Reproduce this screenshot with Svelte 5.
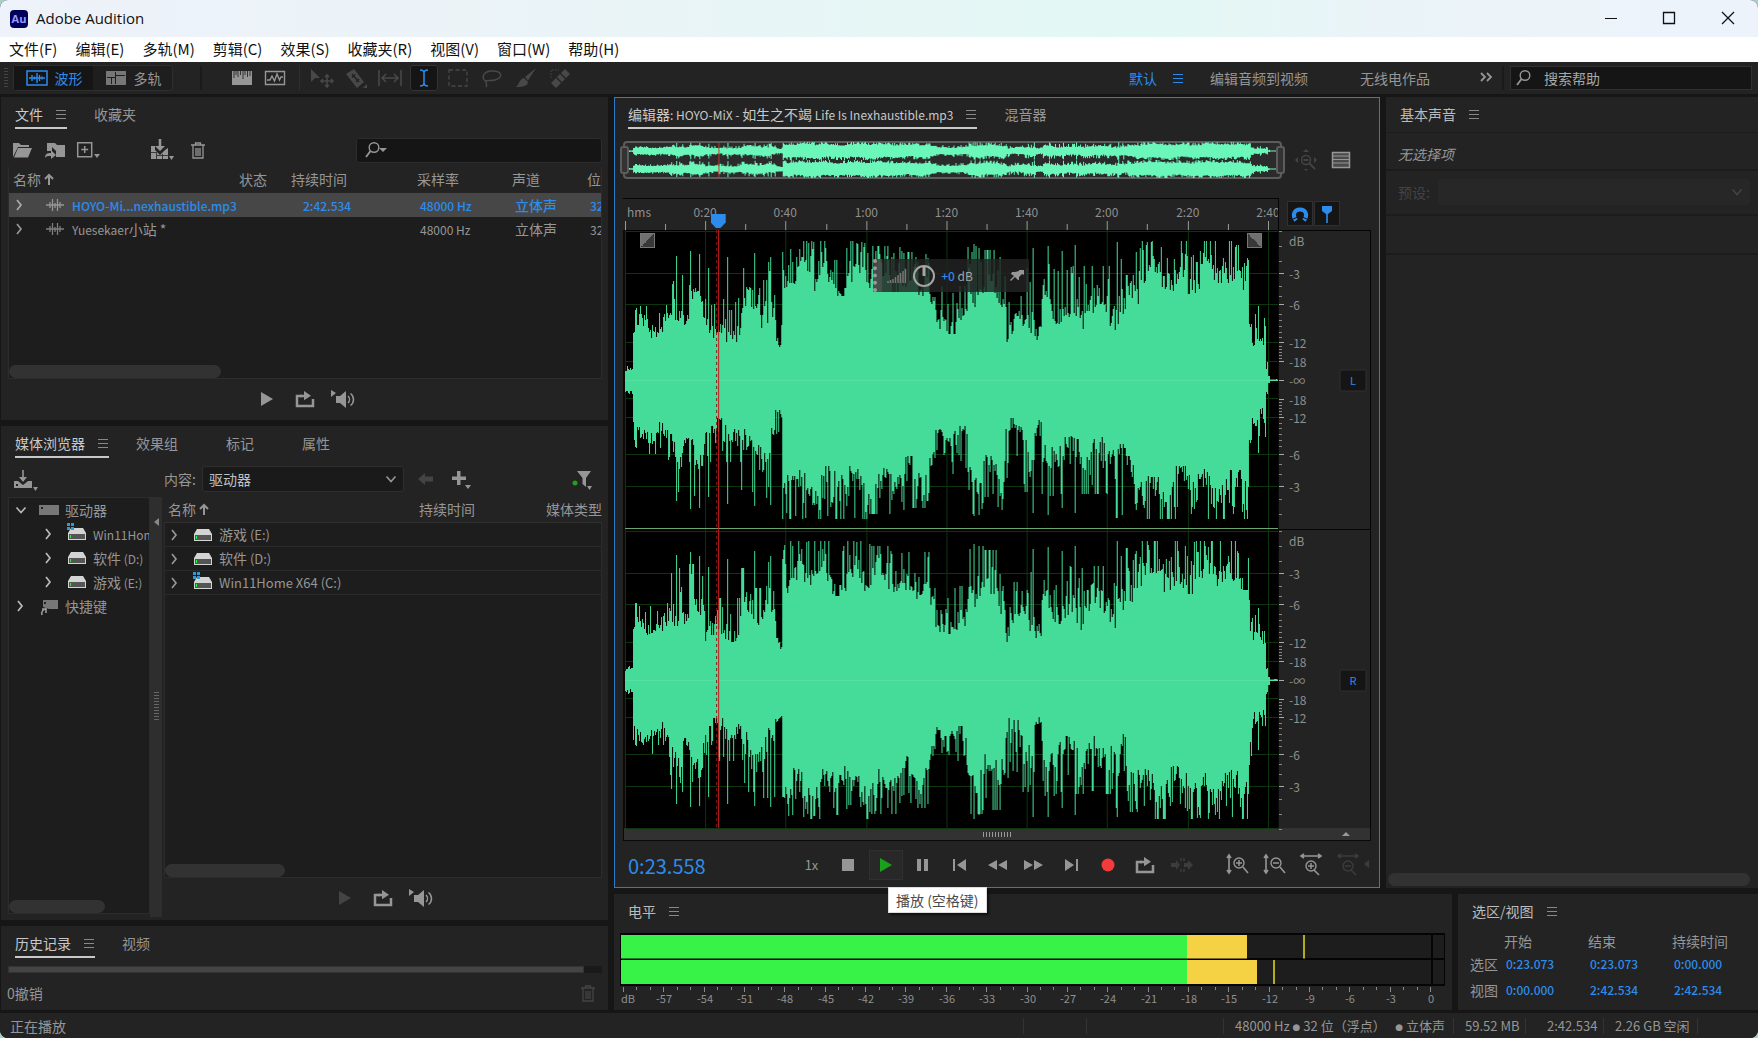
<script lang="ts">
  const menus = ['文件(F)', '编辑(E)', '多轨(M)', '剪辑(C)', '效果(S)', '收藏夹(R)', '视图(V)', '窗口(W)', '帮助(H)'];
  const tools = ['move', 'razor', 'slip', 'ibeam', 'marquee', 'lasso', 'brush', 'heal'];

  const files = [
    { name: 'HOYO-Mi...nexhaustible.mp3', suffix: '', duration: '2:42.534', rate: '48000 Hz', channels: '立体声', bits: '32', active: true },
    { name: 'Yuesekaer', suffix: '小站 *', duration: '', rate: '48000 Hz', channels: '立体声', bits: '32', active: false },
  ];
  const tree = [
    { label: '驱动器', mount: '', icon: 'drives', depth: 0, open: true },
    { label: '', mount: 'Win11Home', icon: 'sysdrive', depth: 1 },
    { label: '软件', mount: ' (D:)', icon: 'drive', depth: 1 },
    { label: '游戏', mount: ' (E:)', icon: 'drive', depth: 1 },
    { label: '快捷键', mount: '', icon: 'shortcut', depth: 0 },
  ];
  const drives = [
    { label: '游戏', mount: ' (E:)', icon: 'drive' },
    { label: '软件', mount: ' (D:)', icon: 'drive' },
    { label: '', mount: 'Win11Home X64 (C:)', icon: 'sysdrive' },
  ];
  const transport = ['stop', 'play', 'pause', 'prev', 'rewind', 'forward', 'next', 'record', 'loop', 'skip'];
  const zooms = ['zoomInV', 'zoomOutV', 'zoomInH', 'zoomOutH'];
  const ranges = [
    { label: '选区', start: '0:23.073', end: '0:23.073', length: '0:00.000' },
    { label: '视图', start: '0:00.000', end: '2:42.534', length: '2:42.534' },
  ];

  const W = 652;
  const H = 598;
  const seconds = 162.534;
  const timeX = (s: number) => Math.round((s / seconds) * W);
  const ruler = Array.from({ length: 17 }, (_, i) => i * 10);
  const clock = (s: number) => `${Math.floor(s / 60)}:${String(s % 60).padStart(2, '0')}`;
  const pct = (v: number, total: number) => `${(v / total) * 100}%`;

  // Envelope sections: [end x, quietest, loudest], in pixels from the centre line.
  const sections = [
    [8, 9, 14], [10, 38, 60], [12, 60, 77], [38, 42, 74], [45, 48, 84], [59, 54, 112], [64, 54, 66],
    [78, 56, 116], [80, 55, 75], [94, 38, 82], [116, 38, 82], [130, 46, 112], [138, 50, 92], [150, 48, 118],
    [157, 30, 60], [162, 92, 139], [205, 86, 139], [245, 84, 139], [280, 88, 134], [304, 76, 128],
    [310, 62, 92], [316, 44, 70], [342, 46, 94], [358, 70, 134], [380, 66, 130], [393, 38, 98], [409, 46, 112],
    [416, 34, 56], [430, 56, 116], [455, 56, 114], [490, 50, 114], [500, 54, 138], [515, 76, 132],
    [540, 86, 139], [580, 86, 139], [623, 90, 139], [626, 48, 85], [632, 32, 66], [638, 24, 56], [640, 26, 62],
    [642, 8, 18], [644, 2, 5], [653, 0, 1],
  ];
  const spikes: Record<number, number> = {
    51: 126, 65: 130, 74: 128, 83: 118, 102: 126, 129: 130, 145: 128, 302: 126, 348: 139, 353: 138,
    407: 137, 422: 139, 436: 133, 449: 135, 491: 139, 510: 130, 632: 76,
  };

  function noise(seed: number) {
    let s = seed;
    return () => {
      s = (s * 1664525 + 1013904223) % 4294967296;
      return s / 4294967296;
    };
  }

  function envelope(seed: number): number[] {
    const rnd = noise(seed);
    const out: number[] = [];
    let part = 0;
    for (let x = 0; x < W; x++) {
      while (x >= sections[part][0]) part++;
      const [, lo, hi] = sections[part];
      const swell = 0.16 * Math.sin(x / 4.3 + seed) + 0.12 * Math.sin(x / 9.1);
      // a ragged body with narrow peaks standing out of it, fewer where it is quiet
      const level = rnd() < (lo < 60 ? 0.7 : 0.58) ? 0.1 + rnd() * 0.4 + swell : 0.45 + rnd() * 0.75 + swell;
      let a = lo + (hi - lo) * Math.max(0, Math.min(1, level));
      if (spikes[x]) a = spikes[x] - rnd() * 6;
      out.push(Math.round(a));
    }
    return out;
  }

  function shape(top: number[], bottom: number[], mid: number, scale: number): string {
    let d = `M0 ${mid}`;
    top.forEach((a, x) => (d += `V${(mid - Math.max(0.5, a * scale)).toFixed(1)}H${x + 1}`));
    for (let x = W - 1; x >= 0; x--) d += `V${(mid + Math.max(0.5, bottom[x] * scale)).toFixed(1)}H${x}`;
    return d + 'Z';
  }

  const channels = [
    { mid: 150, mini: 8, top: envelope(11), bottom: envelope(52) },
    { mid: 450, mini: 26, top: envelope(87), bottom: envelope(34) },
  ];
  const waves = channels.map((c) => shape(c.top, c.bottom, c.mid, 1));
  const minis = channels.map((c) => shape(c.top, c.bottom, c.mini, 0.064));

  const gridY = [-149, -107, -76, -38, -19, 18, 37, 74, 106, 148];
  const dbMarks: [string, number][] = [
    ['-3', -107], ['-6', -76], ['-12', -38], ['-18', -19], ['-∞', 0], ['-18', 19], ['-12', 37], ['-6', 74], ['-3', 106],
  ];
  const dbTicks = [-149, -134, -119, -94, -84, -66, -60, -54, -48, -43, -34, -31, -28, -25, -22];
  const allTicks = [...dbTicks, ...dbTicks.map((t) => -t)];

  const M = 825;
  const meterX = (db: number) => Math.round(811 + (db * 807) / 60);
  const meterTicks = Array.from({ length: 61 }, (_, i) => i - 60);
  const meters = [
    { level: 627, peak: 683 },
    { level: 637, peak: 653 },
  ];
</script>

{#snippet icon(name: string)}
  <svg class="icon" viewBox="0 0 24 24" width="24" height="24" aria-hidden="true">
    {#if name === 'wave'}
      <path d="M2 5h20v14H2z" fill="none" stroke="currentColor" stroke-width="1.5" />
      <path d="M4 12h16M7 9v6M9.500 10.500v3M12 7v10M14.500 9v6M17 10.500v3" stroke="currentColor" stroke-width="1.400" />
    {:else if name === 'multi'}
      <path d="M2 5h9v6H2zM12 5h10v4H12zM2 12h5v7H2zM8 12h3v7H8zM12 10h10v9H12z" fill="#777" />
      <path d="M2.500 5.500h19v13h-19z" fill="none" stroke="#777" />
    {:else if name === 'spectral'}
      <path d="M2 5h20v14H2z" fill="currentColor" />
      <path d="M4 5v7M6 5v4M8 5v6M10.500 5v4M13 5v8M15 5v4M17.500 5v6M20 5v5" stroke="#333" />
    {:else if name === 'pitch'}
      <path d="M2.500 5.500h19v13h-19zM4 14h3l2-4 2.500 5 2.500-7 2.500 6 1.500-3h2" fill="none" stroke="currentColor" stroke-width="1.400" />
    {:else if name === 'move'}
      <path d="M1 3v13l4-4h5z" fill="currentColor" />
      <path d="M17 9v12M11 15h12M15 11l2-2 2 2M15 19l2 2 2-2M13 13l-2 2 2 2M21 13l2 2-2 2" fill="none" stroke="currentColor" stroke-width="1.600" />
    {:else if name === 'razor'}
      <path d="M2 8l8-5 10 13-7 6z" fill="currentColor" />
      <path d="M8 8l7 8M8 11.500l3-3M12 16l3-3" stroke="#232323" stroke-width="1.600" />
      <path d="M23 18v4h-4z" fill="currentColor" />
    {:else if name === 'slip'}
      <path d="M1 4v16M23 4v16M4 12h16M8 8l-4 4 4 4M16 8l4 4-4 4" fill="none" stroke="currentColor" stroke-width="1.600" />
    {:else if name === 'ibeam'}
      <path d="M8 4c3 0 4 1 4 3v10c0 2-1 3-4 3M16 4c-3 0-4 1-4 3v10c0 2 1 3 4 3" fill="none" stroke="currentColor" stroke-width="1.500" />
    {:else if name === 'marquee'}
      <path d="M3 4h18v16H3z" fill="none" stroke="currentColor" stroke-width="1.300" stroke-dasharray="4 2.500" />
    {:else if name === 'lasso'}
      <path d="M7 16C1 13 2 6 11 5c11-1 13 7 4 9-4 1-8 0-9 1s2 4 0 6" fill="none" stroke="currentColor" stroke-width="1.500" />
    {:else if name === 'brush'}
      <path d="M22 2L11 11l3 3.500zM10 12l4 4c0 4-5 5-12 5 3-2 3-8 8-9z" fill="currentColor" />
    {:else if name === 'heal'}
      <path d="M3 17l5-5 5 5-5 5zM9 11l3-3 5 5-3 3zM13 7l4-4 5 5-4 4z" fill="currentColor" />
      <path d="M3 12V4h8" fill="none" stroke="currentColor" stroke-dasharray="1.500 1.500" />
    {:else if name === 'folder'}
      <path d="M3 19V5h6l2 2h8v2H8zM4 19.500L8 10h14l-4 9.500z" fill="currentColor" />
    {:else if name === 'import'}
      <path d="M4 5h8l2 2h8v12h-9v-6l-4-4v4H4z" fill="currentColor" />
      <path d="M2 20c0-4 2-5 6-5v-3l5 5-5 4v-3c-3 0-5 0-6 2z" fill="currentColor" />
    {:else if name === 'new'}
      <path d="M1.700 4.700h14v14h-14zM8.700 8v7M5.200 11.500h7" fill="none" stroke="currentColor" stroke-width="1.500" />
      <path d="M18 16h6l-3 4z" fill="currentColor" />
    {:else if name === 'insert'}
      <path d="M2 8h4v4l5 5 5-5 3-2v11H2zM9.700 1h2.600v7H16l-5 5-5-5h3.700z" fill="currentColor" />
      <path d="M2 14.500h5M7.500 14v7M13.500 16v5M8 17.500h11" stroke="#232323" stroke-width=".8" />
      <path d="M20 18h5l-2.500 4z" fill="currentColor" />
    {:else if name === 'trash'}
      <path d="M5 7h14M9.500 7V5h5v2M7 7v13h10V7M10 10v8M12 10v8M14 10v8" fill="none" stroke="currentColor" stroke-width="1.300" />
    {:else if name === 'search'}
      <circle cx="14" cy="9.500" r="4.800" fill="none" stroke="currentColor" stroke-width="1.400" />
      <path d="M10.500 13L6 19" stroke="currentColor" stroke-width="1.800" />
    {:else if name === 'clip'}
      <path d="M3 12h18M7 9v6M9.500 6v12M12 10v5M14.500 6v12M17 9v6" stroke="currentColor" stroke-width="1.300" opacity=".8" />
    {:else if name === 'play'}
      <path d="M6 5l12 7-12 7z" fill="currentColor" />
    {:else if name === 'loop'}
      <path d="M9 9H4v10h16v-7" fill="none" stroke="currentColor" stroke-width="2.500" />
      <path d="M11 4l7 4.800-7 4.500z" fill="currentColor" />
      <path d="M7 9h6" stroke="currentColor" stroke-width="2.500" />
    {:else if name === 'speaker'}
      <path d="M0 3l5 3-5 4zM5 9h4l6-5v17l-6-5H5z" fill="currentColor" />
      <path d="M17 9c2 2 2 5 0 7M19.500 6.500c4 3 4 9 0 12" fill="none" stroke="currentColor" stroke-width="1.500" />
    {:else if name === 'ingest'}
      <path d="M2 14h4l5 4 5-4h4v7H2zM10.200 3h1.600v7H15l-4 5-4-5h3.200z" fill="currentColor" />
      <path d="M4 17h2v2H4z" fill="#232323" />
      <path d="M21 20h5l-2.500 4z" fill="currentColor" />
    {:else if name === 'back'}
      <path d="M4 12l7-6v3.500h8v5h-8V18z" fill="currentColor" />
    {:else if name === 'plus'}
      <path d="M9 4h3.500v5.500H18V13h-5.500v5H9v-5H4V9.500h5zM17 18h6l-3 4z" fill="currentColor" />
    {:else if name === 'filter'}
      <path d="M6 4h14l-5 7v9l-3.500-3v-6zM16 19h5l-2.500 4z" fill="currentColor" />
      <circle cx="4" cy="16" r="2.500" fill="#20a020" />
    {:else if name === 'drives'}
      <path d="M2 7h20v10H2z" fill="#777" />
      <path d="M4 9h2v2H4z" fill="#222" />
    {:else if name === 'drive' || name === 'sysdrive'}
      <path d="M6 6h12l3 5v7H3v-7z" fill="#d4d4d4" />
      <path d="M4 12h16v5H4z" fill="#555" />
      <path d="M5 13h1v3H5z" fill="#3e4" />
      {#if name === 'sysdrive'}
        <path d="M2 1h3v3H2zM6 1h3v3H6zM2 5h3v3H2zM6 5h3v3H6z" fill="#2b9be0" />
      {/if}
    {:else if name === 'shortcut'}
      <path d="M6 6h15v9h-9l-3-1-3-1z" fill="#777" />
      <path d="M7 8h2v2H7z" fill="#222" />
      <path d="M5 21c-1-3 1-6 4-6H5M9 14v5" fill="none" stroke="#999" stroke-width="1.600" />
    {:else if name === 'chevron'}
      <path d="M9 7l4 5-4 5" fill="none" stroke="currentColor" stroke-width="1.700" />
    {:else if name === 'down'}
      <path d="M7.500 9.500l4.500 5 4.500-5" fill="none" stroke="currentColor" stroke-width="1.600" />
    {:else if name === 'more'}
      <path d="M5 7l4 4-4 4M11 7l4 4-4 4" fill="none" stroke="currentColor" stroke-width="1.800" />
    {:else if name === 'stop'}
      <path d="M5 6h12v12H5z" fill="currentColor" />
    {:else if name === 'pause'}
      <path d="M6 6h4v12H6zM13 6h4v12h-4z" fill="currentColor" />
    {:else if name === 'prev'}
      <path d="M5 6h2v12H5zM18 6v12l-9-6z" fill="currentColor" />
    {:else if name === 'next'}
      <path d="M17 6h2v12h-2zM6 6v12l9-6z" fill="currentColor" />
    {:else if name === 'rewind'}
      <path d="M12 7v10l-9-5zM22 7v10l-9-5z" fill="currentColor" />
    {:else if name === 'forward'}
      <path d="M2 7v10l9-5zM12 7v10l9-5z" fill="currentColor" />
    {:else if name === 'record'}
      <circle cx="12" cy="12" r="6.500" fill="#f43b3b" />
    {:else if name === 'skip'}
      <path d="M1 10h5V7l4 5-4 5v-3H1zM14 10h4V7l5 5-5 5v-3h-4z" fill="currentColor" />
      <path d="M11 5v3M11 16v3M14 5v3M14 16v3" stroke="currentColor" stroke-width="1.500" />
    {:else if name === 'zoomInV' || name === 'zoomOutV'}
      <path d="M3 3v18M1 6l2-3 2 3M1 18l2 3 2-3M10 11h6M17 15l5 6" fill="none" stroke="currentColor" stroke-width="1.600" />
      <circle cx="13" cy="11" r="5" fill="none" stroke="currentColor" stroke-width="1.400" />
      {#if name === 'zoomInV'}<path d="M13 8v6" stroke="currentColor" stroke-width="1.500" />{/if}
    {:else if name === 'zoomInH' || name === 'zoomOutH'}
      <path d="M1 4h20M4 2L1 4l3 2M18 2l3 2-3 2M8 14h6M14 18l5 5" fill="none" stroke="currentColor" stroke-width="1.600" />
      <circle cx="11" cy="14" r="5" fill="none" stroke="currentColor" stroke-width="1.400" />
      {#if name === 'zoomInH'}<path d="M11 11v6" stroke="currentColor" stroke-width="1.500" />{/if}
    {:else if name === 'zoomFull'}
      <circle cx="12" cy="12" r="4.500" fill="none" stroke="currentColor" stroke-width="1.500" />
      <path d="M15 15l6 6M9.500 12h5" stroke="currentColor" stroke-width="1.800" />
      <path d="M12 1l3 3H9zM12 23l-2-2h4zM1 12l3-3v6zM23 12l-3-3v6z" fill="currentColor" />
    {:else if name === 'list'}
      <path d="M2.500 4.500h17v15h-17z" fill="#4a4a4a" stroke="currentColor" stroke-width="1.500" />
      <path d="M3 8h16M3 11.500h16M3 15h16" stroke="currentColor" />
    {:else if name === 'magnet'}
      <path d="M8 18.500C4 13 6 7.500 12 7.500s8 5.500 4 11" fill="none" stroke="currentColor" stroke-width="4" />
      <path d="M5 17l5-2M19 17l-5-2" stroke="#151515" />
    {:else if name === 'marker'}
      <path d="M7 4h10v5l-4 3h-2L7 9zM11.200 11h1.600v10h-1.600z" fill="currentColor" />
    {:else if name === 'pin'}
      <path d="M14 6h5v5l-2-1-3 3v3h-1l-3-3-4 4-1-1 4-4-3-2 1-2h3l4-1z" fill="currentColor" />
    {:else if name === 'min'}
      <path d="M4 11.500h12" stroke="currentColor" stroke-width="1.200" />
    {:else if name === 'max'}
      <path d="M4.500 5.500h11v11h-11z" fill="none" stroke="currentColor" stroke-width="1.300" />
    {:else if name === 'close'}
      <path d="M5 5l12 12M17 5L5 17" stroke="currentColor" stroke-width="1.300" />
    {/if}
  </svg>
{/snippet}

{#snippet burger()}
  <svg class="burger" viewBox="0 0 12 12" width="12" height="12" aria-hidden="true">
    <path d="M1 2.500h10M1 6.500h10M1 10.500h10" stroke="currentColor" stroke-width="1.200" />
  </svg>
{/snippet}

{#snippet sorted()}
  <svg class="sorted" viewBox="0 0 10 12" width="10" height="12" aria-hidden="true">
    <path d="M5 12V2M1 6l4-4 4 4" fill="none" stroke="currentColor" stroke-width="2" />
  </svg>
{/snippet}

{#snippet preview(disabled: boolean)}
  <button aria-label="播放" class:off={disabled}>{@render icon('play')}</button>
  <button aria-label="循环">{@render icon('loop')}</button>
  <button aria-label="自动播放">{@render icon('speaker')}</button>
{/snippet}

<div class="app">
  <header class="titlebar">
    <span class="logo">Au</span>
    <h1>Adobe Audition</h1>
    <div class="window-buttons">
      <button aria-label="最小化">{@render icon('min')}</button>
      <button aria-label="最大化">{@render icon('max')}</button>
      <button aria-label="关闭">{@render icon('close')}</button>
    </div>
  </header>

  <nav class="menubar">
    {#each menus as menu}<button>{menu}</button>{/each}
  </nav>

  <div class="toolbar">
    <span class="grip"></span>
    <div class="modes">
      <button class="mode on">{@render icon('wave')}波形</button>
      <button class="mode">{@render icon('multi')}多轨</button>
    </div>
    <div class="displays">
      <button aria-label="频谱">{@render icon('spectral')}</button>
      <button aria-label="音高">{@render icon('pitch')}</button>
    </div>
    <div class="tools">
      {#each tools as tool}
        <button class="tool" class:on={tool === 'ibeam'} aria-label={tool}>{@render icon(tool)}</button>
      {/each}
    </div>
    <div class="workspaces">
      <button class="blue">默认 {@render burger()}</button>
      <button>编辑音频到视频</button>
      <button>无线电作品</button>
      <button aria-label="更多">{@render icon('more')}</button>
    </div>
    <label class="help">
      {@render icon('search')}
      <input type="text" placeholder="搜索帮助" aria-label="搜索帮助" />
    </label>
  </div>

  <main>
    <div class="left">
      <section class="panel files">
        <div class="tabs">
          <button class="tab on">文件 {@render burger()}</button>
          <button class="tab">收藏夹</button>
        </div>
        <div class="file-tools">
          <button aria-label="打开">{@render icon('folder')}</button>
          <button aria-label="导入">{@render icon('import')}</button>
          <button aria-label="新建">{@render icon('new')}</button>
          <button class="apart" aria-label="插入到多轨">{@render icon('insert')}</button>
          <button class="delete" aria-label="删除">{@render icon('trash')}</button>
          <label class="find">
            {@render icon('search')}<span class="caret"></span>
            <input type="text" aria-label="搜索文件" />
          </label>
        </div>
        <div class="box">
          <table class="file-table">
            <colgroup><col class="c1" /><col class="c2" /><col class="c3" /><col class="c4" /><col class="c5" /><col /></colgroup>
            <thead>
              <tr><th>名称{@render sorted()}</th><th>状态</th><th>持续时间</th><th>采样率</th><th>声道</th><th>位</th></tr>
            </thead>
            <tbody>
              {#each files as file}
                <tr class:active={file.active}>
                  <td><span class="name">{@render icon('chevron')}{@render icon('clip')}<span><small>{file.name}</small>{file.suffix}</span></span></td>
                  <td></td>
                  <td><small>{file.duration}</small></td>
                  <td><small>{file.rate}</small></td>
                  <td>{file.channels}</td>
                  <td><small>{file.bits}</small></td>
                </tr>
              {/each}
            </tbody>
          </table>
          <div class="thumb t-files"></div>
        </div>
        <div class="preview">{@render preview(false)}</div>
      </section>

      <section class="panel media">
        <div class="tabs">
          <button class="tab on">媒体浏览器 {@render burger()}</button>
          <button class="tab">效果组</button>
          <button class="tab wide">标记</button>
          <button class="tab wide">属性</button>
        </div>
        <div class="media-tools">
          <button aria-label="收录">{@render icon('ingest')}</button>
          <label for="content">内容:</label>
          <span class="select">
            <select id="content"><option>驱动器</option></select>
            {@render icon('down')}
          </span>
          <button class="off" aria-label="后退">{@render icon('back')}</button>
          <button aria-label="添加">{@render icon('plus')}</button>
          <button class="end" aria-label="筛选">{@render icon('filter')}</button>
        </div>
        <div class="browser">
          <div class="tree">
            <ul>
              {#each tree as node}
                <li class:child={node.depth === 1}>
                  {@render icon(node.open ? 'down' : 'chevron')}{@render icon(node.icon)}<span>{node.label}<small>{node.mount}</small></span>
                </li>
              {/each}
            </ul>
            <div class="thumb t-tree"></div>
          </div>
          <div class="splitter"><i class="arrow"></i><i class="dots"></i></div>
          <div class="drive-list">
            <div class="list-head"><span>名称{@render sorted()}</span><span>持续时间</span><span>媒体类型</span></div>
            <div class="box">
              <ul>
                {#each drives as drive}
                  <li>{@render icon('chevron')}{@render icon(drive.icon)}<span>{drive.label}<small>{drive.mount}</small></span></li>
                {/each}
              </ul>
              <div class="thumb t-drives"></div>
            </div>
            <div class="preview">{@render preview(true)}</div>
          </div>
        </div>
      </section>

      <section class="panel history">
        <div class="tabs">
          <button class="tab on">历史记录 {@render burger()}</button>
          <button class="tab">视频</button>
        </div>
        <div class="progress"><div></div></div>
        <div class="undo"><span>0撤销</span><button class="off" aria-label="删除记录">{@render icon('trash')}</button></div>
      </section>
    </div>

    <div class="right">
      <div class="upper">
        <section class="panel editor">
          <div class="tabs">
            <button class="tab on">
              <span>编辑器<small>{': HOYO-MiX - '}</small>如生之不竭<small>{' Life Is Inexhaustible.mp3'}</small></span>
              {@render burger()}
            </button>
            <button class="tab">混音器</button>
          </div>

          <div class="overview-row">
            <div class="overview">
              <svg viewBox="0 0 652 34" preserveAspectRatio="none" aria-hidden="true">
                {#each minis as d}<path {d} fill="#6bf7ba" />{/each}
                <path d="M93.500 0v34" stroke="#c0392b" />
              </svg>
              <i class="handle"></i><i class="handle last"></i>
            </div>
            <button class="off" aria-label="缩放重置">{@render icon('zoomFull')}</button>
            <button aria-label="显示列表">{@render icon('list')}</button>
          </div>

          <div class="timeline">
            <div class="ruler">
              <svg aria-label="时间标尺">
                <text x="2" y="19">hms</text>
                {#each ruler as s}
                  <line x1={pct(timeX(s) + 0.5, W)} x2={pct(timeX(s) + 0.5, W)} y1={s % 20 ? 26 : 23} y2="32" stroke="#9a9a9a" />
                  {#if s % 20 === 0 && s > 0}<text x={pct(timeX(s), W)} y="19" text-anchor="middle">{clock(s)}</text>{/if}
                {/each}
              </svg>
              <i class="playhead"></i>
            </div>
            <div class="snap">
              <button aria-label="对齐">{@render icon('magnet')}</button>
              <button aria-label="标记对齐">{@render icon('marker')}</button>
            </div>

            <div class="canvas">
              <svg viewBox="0 0 652 598" preserveAspectRatio="none" role="img" aria-label="波形">
                {#each channels as c}
                  {#each gridY as y}<path d="M0 {c.mid + y + 0.5}h652" stroke="#0d360d" />{/each}
                {/each}
                {#each ruler.filter((s) => s % 20 === 0) as s}
                  <path d="M{timeX(s) + 0.5} 0v598" stroke="#0d360d" />
                {/each}
                {#each waves as d}<path {d} fill="#44dc98" />{/each}
                <path d="M0 150.500h652M0 450.500h652" stroke="#58e0a4" />
                <path d="M0 298.500h652" stroke="#6aa56a" />
                <path d="M91.500 0v598" stroke="#7a2020" stroke-dasharray="3 3" />
                <path d="M93.500 0v598" stroke="#c81e1e" />
              </svg>
              <i class="fade"></i><i class="fade out"></i>
              <div class="hud">
                <i class="hud-grip"></i>
                <svg viewBox="0 0 20 14" width="20" height="14" aria-hidden="true">
                  <path d="M1 12v2M3.500 11v3M6 10v4M8.500 8v6M11 6v8M13.500 4v10M16 2v12M18.500 0v14" stroke="#777" stroke-width="1.500" />
                </svg>
                <svg viewBox="0 0 24 24" width="24" height="24" aria-hidden="true">
                  <circle cx="12" cy="12" r="10" fill="none" stroke="#a5a5a5" stroke-width="2" />
                  <path d="M12 3v9" stroke="#a5a5a5" stroke-width="3" />
                </svg>
                <span><em>+0</em> dB</span>
                <button aria-label="固定">{@render icon('pin')}</button>
              </div>
            </div>

            <div class="scale">
              <svg aria-label="振幅标尺">
                {#each channels as c, i}
                  <text x="10" y={pct(c.mid - 134, H)}>dB</text>
                  {#each dbMarks as [label, y]}
                    <line x2="5" y1={pct(c.mid + y + 0.5, H)} y2={pct(c.mid + y + 0.5, H)} stroke="#aaa" />
                    <text x="10" y={pct(c.mid + y + 6, H)}>{label}</text>
                  {/each}
                  {#each allTicks as y}
                    <line x2="3" y1={pct(c.mid + y + 0.5, H)} y2={pct(c.mid + y + 0.5, H)} stroke="#888" />
                  {/each}
                  <rect x="61" y={pct(c.mid - 10, H)} width="26" height="21" rx="1" fill="#151515" stroke="#303030" />
                  <text class="channel" x="74" y={pct(c.mid + 5, H)} text-anchor="middle">{i ? 'R' : 'L'}</text>
                {/each}
                <line x2="100%" y1={pct(299.5, H)} y2={pct(299.5, H)} stroke="#050505" />
              </svg>
            </div>
            <div class="hscroll"><i class="dots"></i><i class="up"></i></div>
          </div>

          <div class="transport">
            <output>0:23.558</output>
            <div class="keys">
              <button class="speed">1x</button>
              {#each transport as t}
                <span class="key">
                  <button class:playing={t === 'play'} class:off={t === 'skip'} aria-label={t}>{@render icon(t)}</button>
                  {#if t === 'play'}<span class="tip" role="tooltip">播放 (空格键)</span>{/if}
                </span>
              {/each}
            </div>
            <div class="zooms">
              {#each zooms as z}
                <button class:off={z === 'zoomOutH'} aria-label={z}>{@render icon(z)}</button>
              {/each}
              <i class="arrow dim"></i>
            </div>
          </div>
        </section>

        <section class="panel essential">
          <div class="tabs"><button class="tab plain">基本声音 {@render burger()}</button></div>
          <p>无选择项</p>
          <div class="preset">
            <label for="preset">预设:</label>
            <span class="select">
              <select id="preset" disabled><option></option></select>
              {@render icon('down')}
            </span>
          </div>
          <div class="blank"></div>
          <div class="thumb t-right"></div>
        </section>
      </div>

      <div class="lower">
        <section class="panel levels">
          <div class="tabs"><button class="tab plain">电平 {@render burger()}</button></div>
          <svg class="meter" aria-label="电平表">
            <rect x="0" y="0" width="100%" height="53" fill="#050505" />
            <rect x="1" y="2" width={pct(810, M)} height="23" fill="#1d1d1d" />
            <rect x="1" y="27" width={pct(810, M)} height="24" fill="#1d1d1d" />
            <rect x={pct(813, M)} y="2" width={pct(11, M)} height="23" fill="#1d1d1d" />
            <rect x={pct(813, M)} y="27" width={pct(11, M)} height="24" fill="#1d1d1d" />
            {#each meters as m, i}
              <rect x="1" y={i * 25 + 2} width={pct(566, M)} height="24" fill="#37f247" />
              <rect x={pct(567, M)} y={i * 25 + 2} width={pct(m.level - 567, M)} height="24" fill="#f5d244" />
              <rect x={pct(m.peak, M)} y={i * 25 + 2} width="2" height="24" fill="#b5ac1a" />
            {/each}
            <line x2="100%" y1="26" y2="26" stroke="#050505" />
            {#each meterTicks as db}
              <line x1={pct(meterX(db) - 0.5, M)} x2={pct(meterX(db) - 0.5, M)} y1="54" y2={db % 3 ? 57 : 59} stroke="#8a8a8a" />
              {#if db % 3 === 0 && db > -60}<text x={pct(meterX(db), M)} y="70" text-anchor="middle">{db}</text>{/if}
            {/each}
            <text x="1" y="70">dB</text>
          </svg>
        </section>

        <section class="panel selection">
          <div class="tabs"><button class="tab plain">选区/视图 {@render burger()}</button></div>
          <table>
            <thead><tr><th></th><th>开始</th><th>结束</th><th>持续时间</th></tr></thead>
            <tbody>
              {#each ranges as r}
                <tr><th>{r.label}</th><td>{r.start}</td><td>{r.end}</td><td>{r.length}</td></tr>
              {/each}
            </tbody>
          </table>
        </section>
      </div>
    </div>
  </main>

  <footer>
    <span class="state">正在播放</span>
    <span class="cell w1"></span>
    <span class="cell w2"></span>
    <span class="cell format"><span>48000 Hz <i>●</i> 32 位（浮点）</span><span><i>●</i> 立体声</span></span>
    <span class="cell size">59.52 MB</span>
    <span class="cell length">2:42.534</span>
    <span class="cell free">2.26 GB 空闲</span>
    <span class="cell w3"></span>
  </footer>
</div>

<style>
  :global(body) { background: #a9cfcb; }
  * { box-sizing: border-box; }
  .app {
    display: flex; flex-direction: column; min-height: 100vh; overflow: hidden;
    border-radius: 8px; background: #161616; color: #969696;
    font: 14px/20px "Noto Sans CJK SC", sans-serif;
  }
  button, input, select { font: inherit; color: inherit; background: none; border: 0; padding: 0; margin: 0; }
  button { display: inline-flex; align-items: center; white-space: nowrap; }
  ul { list-style: none; margin: 0; padding: 0; }
  svg { display: block; flex: none; overflow: visible; }
  /* Latin runs sit smaller than the Chinese text beside them. */
  small { font-size: 12px; white-space: pre; }
  .off { color: #444; }
  .blue { color: #2d8ceb; }

  .titlebar {
    display: flex; align-items: center; height: 37px; padding-left: 10px; gap: 8px; color: #111;
    background: linear-gradient(90deg, #eef2fa, #eaf4f7 35%, #e2f8f4 65%, #eaf4f8 78%, #eef3fb);
  }
  .titlebar h1 { margin: 0; padding-bottom: 2px; font: 15px/20px "Open Sans", sans-serif; }
  .logo {
    width: 18px; height: 18px; border-radius: 4px; background: #00005b; color: #9999ff;
    font: bold 11px/18px "Open Sans", sans-serif; text-align: center;
  }
  .window-buttons { display: flex; margin-left: auto; }
  .window-buttons button { width: 58px; height: 36px; justify-content: center; }

  .menubar { display: flex; gap: 18px; height: 25px; padding: 0 9px 2px; background: #fff; color: #111; }
  .menubar button { font-size: 15px; }

  .toolbar { display: flex; align-items: center; height: 32px; background: #232323; margin-bottom: 3px; }
  .grip { width: 4px; height: 20px; margin: 0 5px 0 4px; background: repeating-linear-gradient(#444 0 1px, transparent 1px 3px); }
  .modes { display: flex; border: 1px solid #2e2e2e; border-radius: 3px; background: #1e1e1e; }
  .mode { width: 79px; height: 24px; justify-content: center; gap: 6px; }
  .mode.on { color: #2d8ceb; background: #151515; }
  .displays { display: flex; gap: 9px; margin-left: 27px; padding: 0 12px 0 28px; border-left: 2px solid #1a1a1a; }
  .tools { display: flex; padding-left: 5px; border-left: 1px solid #2e2e2e; color: #484848; }
  .tool { width: 34px; height: 26px; justify-content: center; }
  .tool.on { width: 28px; margin: 0 3px; color: #2d8ceb; background: #151515; border: 1px solid #333; border-radius: 3px; }
  .workspaces { display: flex; align-items: center; gap: 26px; margin-left: auto; padding-right: 2px; border-right: 2px solid #1a1a1a; }
  .workspaces button { gap: 15px; }
  .workspaces button:nth-child(3) { margin: 0 20px 0 26px; }
  .help { display: flex; align-items: center; gap: 9px; width: 242px; height: 24px; margin: 0 6px; background: #151515; border: 1px solid #303030; }
  .help input { width: 180px; }
  .help input::placeholder { color: #a8a8a8; opacity: 1; }

  main { flex: 1; display: flex; gap: 6px; padding-left: 1px; }
  .left { flex: 607 1 0; min-width: 0; display: flex; flex-direction: column; gap: 6px; }
  .right { flex: 1144 1 0; min-width: 0; display: flex; flex-direction: column; gap: 6px; }
  .panel { background: #232323; display: flex; flex-direction: column; min-width: 0; }

  .tabs { display: flex; gap: 27px; height: 36px; padding: 6px 14px 0; flex: none; }
  .tab { height: 26px; gap: 12px; padding-bottom: 2px; border-bottom: 2px solid transparent; }
  .tab.on { color: #c8c8c8; border-color: #c8c8c8; }
  .tab.plain { color: #bbb; }
  .tab.wide { margin-left: 21px; }
  .burger { color: #888; }
  .blue .burger { color: #2d8ceb; }

  .files { height: 323px; }
  .file-tools { display: flex; align-items: center; gap: 9px; height: 34px; padding: 0 6px 0 9px; }
  .file-tools .apart { margin-left: 40px; }
  .file-tools .delete { margin-left: 4px; }
  .find { display: flex; align-items: center; width: 246px; height: 25px; margin-left: auto; padding-left: 3px; background: #151515; border: 1px solid #2c2c2c; border-radius: 3px; }
  .find input { flex: 1; min-width: 0; }
  .caret { margin-left: -5px; border: 4px solid transparent; border-top-color: currentColor; border-bottom: 0; }
  .box { flex: 1; display: flex; flex-direction: column; min-height: 0; background: #1d1d1d; border: 1px solid #2c2c2c; border-top: 0; overflow: hidden; }
  .files .box { margin: 0 6px 0 7px; }
  .thumb { flex: none; height: 13px; margin-top: auto; background: #323232; border-radius: 7px; }
  .t-files { width: 212px; }
  .file-table { width: 100%; table-layout: fixed; border-collapse: collapse; }
  .c1 { width: 226px; }
  .c2 { width: 52px; }
  .c3 { width: 126px; }
  .c4 { width: 95px; }
  .c5 { width: 75px; }
  .file-table th { height: 26px; padding: 0 0 0 4px; background: #232323; font-weight: normal; line-height: 24px; text-align: left; vertical-align: top; white-space: nowrap; }
  .file-table td { height: 24px; padding: 0 0 0 7px; overflow: hidden; white-space: nowrap; }
  .file-table td:nth-child(3) { padding-left: 16px; }
  .file-table td:first-child { padding-left: 0; overflow: visible; }
  .active td { background: #474747; color: #2d8ceb; font-weight: 500; }
  .active .icon { color: #aaa; }
  .name { display: flex; align-items: center; }
  .name .icon:nth-child(1) { margin-left: -1px; }
  .name .icon:nth-child(2) { margin: 0 5px 0 11px; }
  .sorted { display: inline-block; margin-left: 3px; }
  .preview { display: flex; align-items: center; justify-content: center; gap: 14px; height: 41px; }
  .files .preview { padding-bottom: 2px; }

  .media { flex: 1; }
  .media-tools { display: flex; align-items: center; height: 35px; padding: 0 13px 2px 11px; }
  .media-tools label { margin: 0 6px 0 128px; }
  .select { position: relative; display: flex; align-items: center; background: #1a1a1a; border: 1px solid #2e2e2e; border-radius: 3px; }
  .select select { appearance: none; width: 100%; height: 24px; padding-left: 6px; color: #c0c0c0; }
  .select .icon { position: absolute; right: 0; pointer-events: none; }
  .media-tools .select { width: 202px; margin-right: 10px; }
  .media-tools button + button { margin-left: 10px; }
  .media-tools .end { margin-left: auto; }
  .browser { flex: 1; display: flex; padding: 0 6px 3px 7px; }
  .tree { display: flex; flex-direction: column; width: 142px; overflow: hidden; background: #1d1d1d; border: 1px solid #2c2c2c; margin-bottom: 3px; }
  .tree li, .drive-list li { display: flex; align-items: center; gap: 4px; height: 24px; white-space: nowrap; }
  .tree li .icon:first-child { color: #bbb; }
  .tree li.child { padding-left: 28px; }
  .t-tree { width: 96px; }
  .splitter { display: flex; flex-direction: column; align-items: center; width: 12px; background: #2e2e2e; padding-top: 21px; }
  .arrow { border: 4px solid transparent; border-right: 5px solid #888; border-left: 0; }
  .splitter .dots { width: 5px; height: 28px; margin: 166px 0 auto; background: repeating-linear-gradient(#666 0 1px, transparent 1px 3px); }
  .drive-list { flex: 1; display: flex; flex-direction: column; min-width: 0; margin-left: 2px; }
  .list-head { display: flex; height: 26px; padding: 2px 0 0 4px; border-bottom: 1px solid #303030; }
  .list-head span:first-child { width: 251px; }
  .list-head span:last-child { margin-left: auto; }
  .drive-list li { border-bottom: 1px solid #2a2a2a; }
  .drive-list li .icon:first-child { margin-left: -2px; }
  .drive-list small { font-size: 13px; }
  .t-drives { width: 120px; }
  .drive-list .preview { padding: 0; height: 39px; }

  .history { height: 84px; }
  .progress { height: 7px; margin: 4px 6px 0 7px; background: #1a1a1a; }
  .progress div { width: 97%; height: 7px; background: #444; border: 1px solid #333; }
  .undo { display: flex; align-items: center; justify-content: space-between; height: 36px; padding: 4px 8px 0 6px; }

  .upper { flex: 1; display: grid; grid-template-columns: minmax(0, 766fr) minmax(0, 372fr); gap: 6px; }
  .editor { border: 1px solid #2d7cc9; padding: 0 8px; }
  .editor .tabs { height: 43px; padding: 5px 5px 0; }
  .overview-row { display: flex; align-items: center; gap: 12px; height: 38px; }
  .overview { position: relative; flex: 1; height: 38px; background: #2b2b2b; border: 2px solid #5c5c5c; border-radius: 4px; }
  .overview svg { width: 100%; height: 34px; }
  .handle { position: absolute; top: 3px; left: -5px; width: 9px; height: 28px; background: #333; border: 2px solid #5c5c5c; border-radius: 3px; }
  .handle.last { left: auto; right: -5px; }
  .overview-row > button:last-child { margin-right: 17px; }

  .timeline { flex: 1; display: grid; grid-template-columns: minmax(0, 1fr) 92px; grid-template-rows: 32px minmax(598px, 1fr) 13px; margin-top: 19px; }
  .ruler { position: relative; overflow: hidden; padding-left: 2px; border-right: 1px solid #050505; box-shadow: inset 0 1px #050505; }
  .ruler svg { width: 100%; height: 32px; }
  .ruler text, .scale text, .levels text { fill: #8f8f8f; font-size: 12px; }
  .playhead { position: absolute; top: 16px; left: 14%; width: 15px; height: 14px; margin-left: -4px; background: #2d8ceb; clip-path: polygon(0 0, 100% 0, 100% 60%, 65% 100%, 35% 100%, 0 60%); }
  .snap { display: flex; gap: 1px; padding: 3px 0 0 8px; color: #2d8ceb; }
  .snap button { width: 26px; height: 25px; justify-content: center; background: #151515; border: 1px solid #303030; }
  .canvas { position: relative; min-height: 0; background: #000; border: solid #0a0a0a; border-width: 0 1px 0 2px; }
  .canvas > svg, .scale svg { position: absolute; width: 100%; height: 100%; }
  .scale { position: relative; box-shadow: inset -1px 1px #050505; }
  .scale .channel { fill: #2d8ceb; font-size: 11px; }
  .fade { position: absolute; top: 3px; left: 15px; width: 15px; height: 15px; border: 1px solid #777; background: linear-gradient(135deg, #707070 50%, #383838 50%); }
  .fade.out { left: auto; right: 16px; background: linear-gradient(45deg, #383838 50%, #707070 50%); }
  .hud { position: absolute; top: 29px; left: 38%; display: flex; align-items: center; gap: 5px; width: 156px; height: 33px; background: #232323d0; }
  .hud-grip { width: 9px; height: 33px; background: #555a; border-left: 4px dotted #999; }
  .hud span { font-size: 12px; color: #a5a5a5; }
  .hud em { font-style: normal; font-weight: 500; color: #2d8ceb; }
  .hud button { margin-left: auto; }
  .hscroll { grid-column: 1 / -1; display: flex; align-items: center; background: #323232; border: 1px solid #0a0a0a; border-top: 0; }
  .hscroll .dots { width: 30px; height: 5px; margin: 0 auto; background: repeating-linear-gradient(90deg, #999 0 1px, #323232 1px 3px); }
  .hscroll::before { content: ""; width: 30px; }
  .hscroll .up { margin-right: 20px; border: 4px solid transparent; border-bottom-color: #999; border-top: 0; }

  .transport { display: flex; align-items: center; height: 46px; padding-left: 5px; }
  .transport output { color: #2d8ceb; font-size: 20px; line-height: 42px; padding-top: 4px; width: 165px; }
  .keys { display: flex; align-items: center; padding-top: 1px; }
  .key { position: relative; width: 37px; display: flex; justify-content: center; }
  .key button { width: 34px; height: 30px; justify-content: center; }
  .key .playing { color: #1ba01b; background: #282828; border: 1px solid #303030; }
  .speed { width: 37px; justify-content: center; font-size: 13px; }
  .tip { position: absolute; z-index: 2; top: 37px; left: 21px; padding: 2px 7px; background: #fff; color: #4a4a4a; border: 1px solid #ddd; box-shadow: 2px 2px 2px #0008; white-space: nowrap; }
  .zooms { position: relative; display: flex; align-items: center; gap: 13px; margin: 0 10px 0 auto; }
  .zooms .dim { position: absolute; right: -8px; border-right-color: #3c3c3c; }
  .transport .off { color: #3c3c3c; }

  .essential .tabs { border-bottom: 1px solid #1c1c1c; }
  .essential p { margin: 0; padding: 11px 12px 7px; height: 38px; font-style: italic; border-bottom: 2px solid #1c1c1c; }
  .preset { display: flex; align-items: center; gap: 8px; height: 45px; padding: 0 8px 2px 12px; color: #444; border-bottom: 2px solid #1c1c1c; }
  .preset .select { flex: 1; background: #272727; border-color: #272727; }
  .blank { height: 39px; border-bottom: 2px solid #1c1c1c; }
  .t-right { margin: auto 8px 2px 2px; }

  .lower { display: grid; grid-template-columns: minmax(0, 838fr) minmax(0, 300fr); gap: 6px; height: 116px; }
  .levels { padding: 0 7px 0 6px; }
  .levels .tabs { padding-left: 8px; height: 39px; }
  .meter { width: 100%; height: 76px; }
  .levels text { font-size: 11px; }
  .selection table { margin-left: 12px; width: 286px; table-layout: fixed; border-collapse: collapse; }
  .selection th, .selection td { height: 26px; padding: 0; font-weight: normal; text-align: left; white-space: nowrap; }
  .selection thead th { height: 21px; }
  .selection th:first-child { width: 34px; }
  .selection td { padding-left: 2px; color: #2d8ceb; font-size: 12px; font-weight: 500; }

  footer { display: flex; align-items: center; height: 25px; margin-top: 3px; background: #232323; font-size: 13px; }
  .state { flex: 1; padding-left: 10px; font-size: 14px; }
  .cell { height: 16px; line-height: 16px; border-left: 1px solid #333; white-space: nowrap; }
  .cell i { font: 9px/9px "DejaVu Sans", sans-serif; vertical-align: 1px; }
  .w1 { width: 63px; }
  .w2 { width: 137px; }
  .w3 { width: 61px; }
  .format { display: flex; justify-content: space-between; width: 230px; padding: 0 8px 0 11px; }
  .size { width: 72px; padding-left: 11px; }
  .length { width: 78px; padding-left: 21px; }
  .free { width: 94px; padding-left: 11px; }
</style>
